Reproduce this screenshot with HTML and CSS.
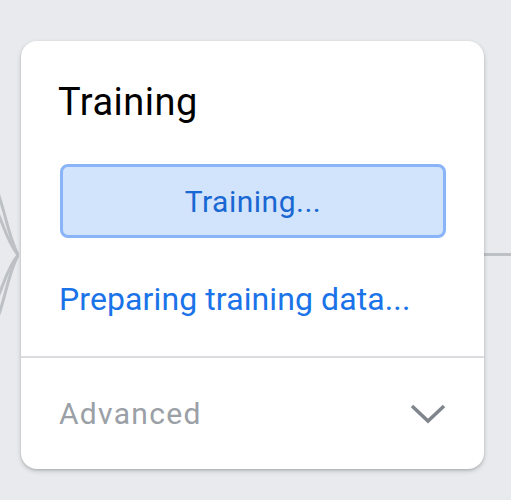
FILE: index.html
```html
<!DOCTYPE html>
<html>
<head>
<meta charset="utf-8">
<link rel="stylesheet" href="styles.css">
</head>
<body>
<div class="canvas">
  <svg class="edges-left" width="24" height="140" viewBox="0 0 24 140">
    <path d="M-2 8 C 6 30, 8 50, 18 70" />
    <path d="M-2 28 C 4 42, 8 58, 18 70" />
    <path d="M-2 132 C 6 110, 8 90, 18 70" />
    <path d="M-2 112 C 4 98, 8 82, 18 70" />
  </svg>
  <div class="edge-right"></div>
  <div class="card">
    <div class="card-body">
      <h1 class="title">Training</h1>
      <button class="train-btn">Training...</button>
      <div class="status">Preparing training data...</div>
    </div>
    <div class="advanced">
      <span class="advanced-label">Advanced</span>
      <svg class="chevron" width="36" height="22" viewBox="0 0 36 22">
        <polyline points="2,3 18,18 34,3" />
      </svg>
    </div>
  </div>
</div>
</body>
</html>
```
FILE: styles.css
```css
html, body {
  margin: 0;
  padding: 0;
  background: #e8eaed;
  width: 511px;
  height: 500px;
  overflow: hidden;
  font-family: Roboto, "Noto Sans", sans-serif;
}
.canvas {
  position: relative;
  width: 511px;
  height: 500px;
  padding: 41px 0 0 21px;
  box-sizing: border-box;
}
.edges-left {
  position: absolute;
  left: 0;
  top: 185px;
  fill: none;
  stroke: #bdc1c6;
  stroke-width: 3;
}
.edge-right {
  position: absolute;
  left: 484px;
  top: 253px;
  width: 27px;
  height: 3px;
  background: #bdc1c6;
}
.card {
  position: relative;
  width: 463px;
  height: 428px;
  background: #fff;
  border-radius: 16px;
  box-shadow: 0 2px 4px rgba(60, 64, 67, 0.25), 0 1px 2px rgba(60,64,67,0.15);
  display: flex;
  flex-direction: column;
}
.card-body {
  padding: 37px 38px 37px 38px;
  display: flex;
  flex-direction: column;
  border-bottom: 2px solid #dadce0;
}
.title {
  margin: 0;
  font-size: 38px;
  line-height: 48px;
  font-weight: 400;
  letter-spacing: 0.5px;
  color: #000;
  margin-left: -1px;
}
.train-btn {
  margin-top: 38px;
  height: 74px;
  background: #d2e3fc;
  border: 3px solid #8ab4f8;
  border-radius: 8px;
  color: #1967d2;
  font-family: inherit;
  font-size: 30px;
  letter-spacing: 0.5px;
  padding: 0;
  margin-left: 1px;
}
.status {
  margin-top: 41px;
  font-size: 32px;
  line-height: 40px;
  letter-spacing: 0.1px;
  color: #1a73e8;
}
.advanced {
  flex: 1;
  display: flex;
  align-items: center;
  justify-content: space-between;
  padding: 0 38px 0 38px;
}
.advanced-label {
  font-size: 30px;
  letter-spacing: 1.3px;
  color: #9aa0a6;
}
.chevron {
  fill: none;
  stroke: #80868b;
  stroke-width: 3.5;
}
```
